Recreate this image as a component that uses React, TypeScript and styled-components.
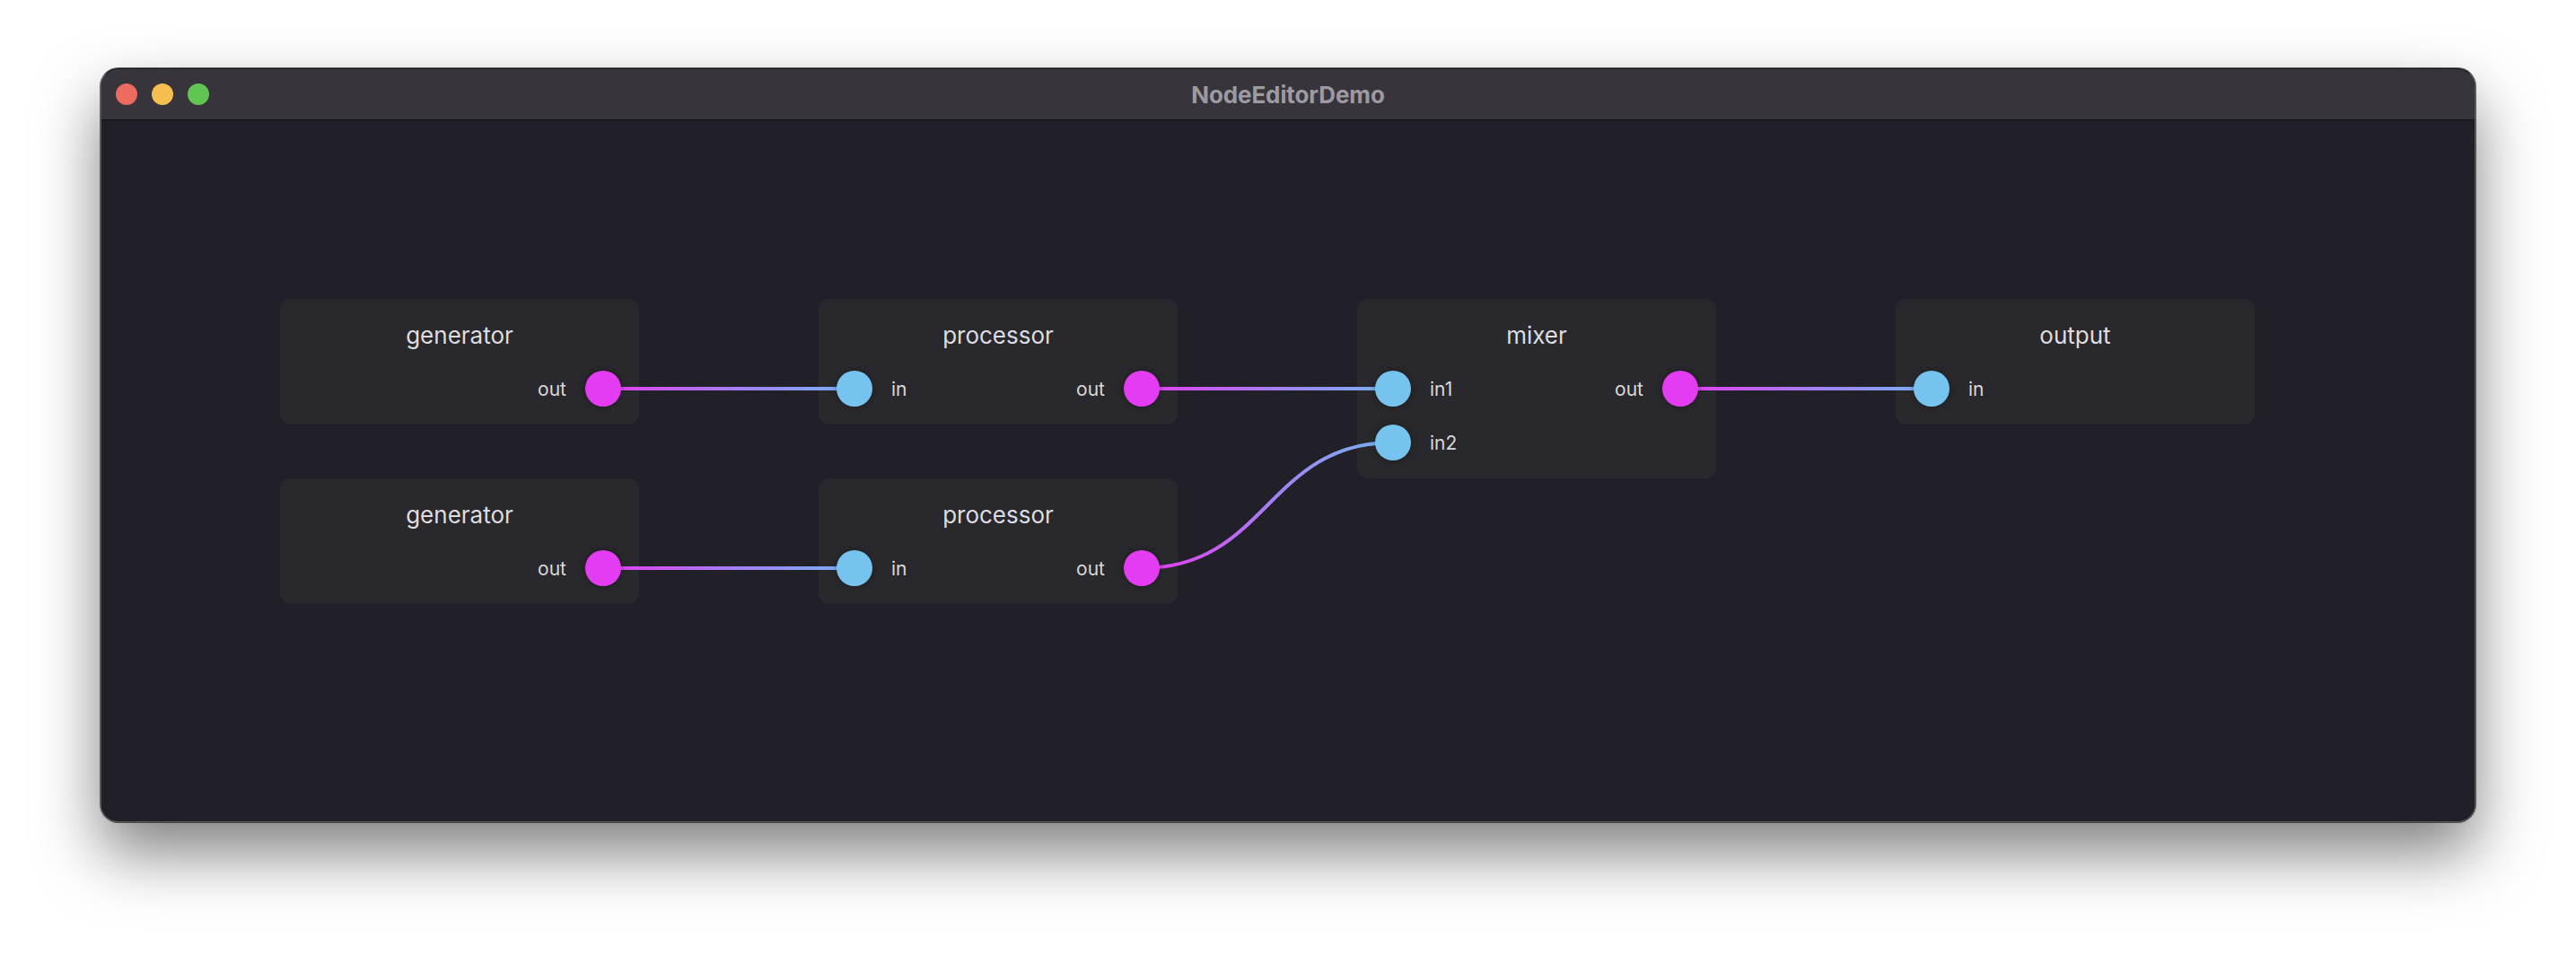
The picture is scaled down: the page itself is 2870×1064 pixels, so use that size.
import React from "react";
import styled, { createGlobalStyle } from "styled-components";

const GlobalStyle = createGlobalStyle`
  html, body {
    margin: 0;
    padding: 0;
    background: #ffffff;
  }
  body {
    font-family: Inter, "Noto Sans", sans-serif;
  }
`;

const Page = styled.div`
  width: 2870px;
  height: 1064px;
  padding-top: 76px;
  box-sizing: border-box;
  overflow: hidden;
`;

const Window = styled.div`
  width: 2646px;
  height: 840px;
  margin: 0 auto;
  box-sizing: border-box;
  display: flex;
  flex-direction: column;
  border-radius: 20px;
  border: 1px solid #57545c;
  border-top-color: #151417;
  background: #211f28;
  overflow: hidden;
  box-shadow: 0 0 0 1px rgba(0, 0, 0, 0.55), 0 34px 70px rgba(0, 0, 0, 0.5);
`;

const TitleBar = styled.div`
  position: relative;
  height: 56px;
  flex-shrink: 0;
  display: flex;
  align-items: center;
  justify-content: center;
  background: #37343b;
  border-bottom: 1px solid #0f0e12;
`;

const Lights = styled.div`
  position: absolute;
  left: 16px;
  top: 16px;
  display: flex;
  gap: 16px;
`;

const Light = styled.span<{ $color: string }>`
  width: 24px;
  height: 24px;
  border-radius: 50%;
  background: ${(p) => p.$color};
`;

const Title = styled.div`
  font-family: Inter, "Liberation Sans", sans-serif;
  font-weight: 700;
  font-size: 26px;
  color: #9d9aa2;
  letter-spacing: -0.1px;
`;

const Canvas = styled.div`
  position: relative;
  flex: 1;
  background: #211f28;
`;

const Wires = styled.svg`
  position: absolute;
  left: 0;
  top: 0;
  width: 100%;
  height: 100%;
  z-index: 1;
  pointer-events: none;
`;

const NodeBox = styled.div`
  position: absolute;
  width: 400px;
  box-sizing: border-box;
  padding-bottom: 10px;
  display: flex;
  flex-direction: column;
  background: #29282c;
  border-radius: 12px;
`;

const NodeTitle = styled.div`
  height: 70px;
  box-sizing: border-box;
  padding-top: 24px;
  line-height: 34px;
  text-align: center;
  font-size: 26px;
  color: #dddce0;
`;

const Row = styled.div`
  height: 60px;
  padding: 0 20px;
  display: flex;
  align-items: center;
  justify-content: space-between;
`;

const Side = styled.div`
  display: flex;
  align-items: center;
  gap: 21px;
`;

const Port = styled.span<{ $kind: "in" | "out" }>`
  position: relative;
  z-index: 2;
  width: 40px;
  height: 40px;
  border-radius: 50%;
  background: ${(p) => (p.$kind === "in" ? "#77c3ef" : "#e33cf3")};
  box-shadow: 0 0 8px rgba(0, 0, 0, 0.3);
`;

const PortLabel = styled.span`
  font-size: 21px;
  color: #d9d8dc;
`;

type NodeDef = {
  id: string;
  title: string;
  x: number;
  y: number;
  inputs: string[];
  outputs: string[];
};

const nodes: NodeDef[] = [
  { id: "gen1", title: "generator", x: 199, y: 199, inputs: [], outputs: ["out"] },
  { id: "proc1", title: "processor", x: 799, y: 199, inputs: ["in"], outputs: ["out"] },
  { id: "mix", title: "mixer", x: 1399, y: 199, inputs: ["in1", "in2"], outputs: ["out"] },
  { id: "outp", title: "output", x: 1999, y: 199, inputs: ["in"], outputs: [] },
  { id: "gen2", title: "generator", x: 199, y: 399, inputs: [], outputs: ["out"] },
  { id: "proc2", title: "processor", x: 799, y: 399, inputs: ["in"], outputs: ["out"] },
];

const links: [string, number, string, number][] = [
  ["gen1", 0, "proc1", 0],
  ["proc1", 0, "mix", 0],
  ["mix", 0, "outp", 0],
  ["gen2", 0, "proc2", 0],
  ["proc2", 0, "mix", 1],
];

const portPos = (id: string, side: "in" | "out", i: number) => {
  const n = nodes.find((d) => d.id === id)!;
  return {
    x: side === "in" ? n.x + 40 : n.x + 360,
    y: n.y + 100 + 60 * i,
  };
};

const Node = ({ node }: { node: NodeDef }) => {
  const rows = Math.max(node.inputs.length, node.outputs.length);
  return (
    <NodeBox style={{ left: node.x, top: node.y }}>
      <NodeTitle>{node.title}</NodeTitle>
      {Array.from({ length: rows }).map((_, i) => (
        <Row key={i}>
          <Side>
            {node.inputs[i] && (
              <>
                <Port $kind="in" />
                <PortLabel>{node.inputs[i]}</PortLabel>
              </>
            )}
          </Side>
          <Side>
            {node.outputs[i] && (
              <>
                <PortLabel>{node.outputs[i]}</PortLabel>
                <Port $kind="out" />
              </>
            )}
          </Side>
        </Row>
      ))}
    </NodeBox>
  );
};

const App = () => {
  return (
    <Page>
      <GlobalStyle />
      <Window>
        <TitleBar>
          <Lights>
            <Light $color="#ec6a5e" />
            <Light $color="#f4bf4f" />
            <Light $color="#61c554" />
          </Lights>
          <Title>NodeEditorDemo</Title>
        </TitleBar>
        <Canvas>
          {nodes.map((n) => (
            <Node key={n.id} node={n} />
          ))}
          <Wires>
            <defs>
              {links.map(([a, ai, b, bi], k) => {
                const s = portPos(a, "out", ai);
                const e = portPos(b, "in", bi);
                return (
                  <linearGradient
                    key={k}
                    id={`wire${k}`}
                    gradientUnits="userSpaceOnUse"
                    x1={s.x}
                    y1={s.y}
                    x2={e.x}
                    y2={e.y}
                  >
                    <stop offset="0" stopColor="#e53cf2" />
                    <stop offset="0.5" stopColor="#a87cf4" />
                    <stop offset="1" stopColor="#74b4f0" />
                  </linearGradient>
                );
              })}
            </defs>
            {links.map(([a, ai, b, bi], k) => {
              const s = portPos(a, "out", ai);
              const e = portPos(b, "in", bi);
              const dx = (e.x - s.x) / 2;
              const d =
                s.y === e.y
                  ? `M${s.x} ${s.y} L${e.x} ${e.y}`
                  : `M${s.x} ${s.y} C${s.x + dx} ${s.y} ${e.x - dx} ${e.y} ${e.x} ${e.y}`;
              return (
                <path
                  key={k}
                  d={d}
                  fill="none"
                  stroke={`url(#wire${k})`}
                  strokeWidth={4}
                  strokeLinecap="round"
                />
              );
            })}
          </Wires>
        </Canvas>
      </Window>
    </Page>
  );
};

export default App;
